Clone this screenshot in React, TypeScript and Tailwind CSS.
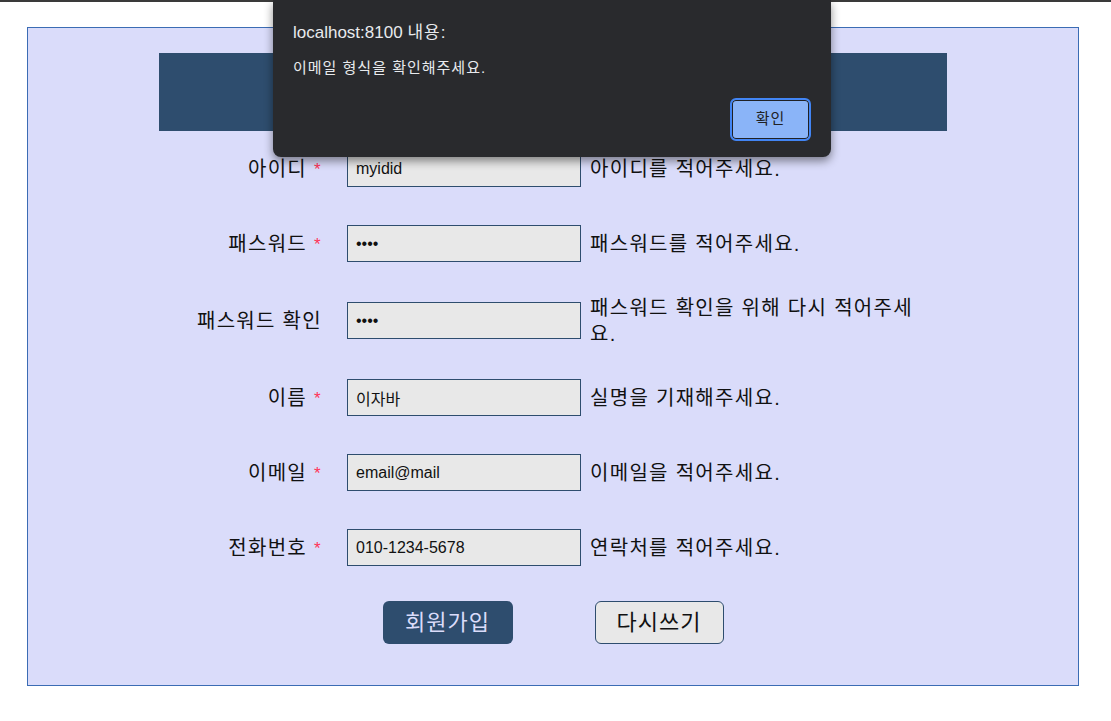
import React from 'react'

const font = "font-['Liberation_Sans','Noto_Sans_CJK_KR',sans-serif]"

/* 가입 폼 행 정의 */
const rows = [
  { label: '아이디', required: true, type: 'text', value: 'myidid', help: '아이디를 적어주세요.', h: 'h-[75px]' },
  { label: '패스워드', required: true, type: 'password', value: '1234', help: '패스워드를 적어주세요.', h: 'h-[75px]' },
  { label: '패스워드 확인', required: false, type: 'password', value: '1234', help: '패스워드 확인을 위해 다시 적어주세요.', h: 'h-[79px]' },
  { label: '이름', required: true, type: 'text', value: '이자바', help: '실명을 기재해주세요.', h: 'h-[75px]' },
  { label: '이메일', required: true, type: 'text', value: 'email@mail', help: '이메일을 적어주세요.', h: 'h-[75px]' },
  { label: '전화번호', required: true, type: 'text', value: '010-1234-5678', help: '연락처를 적어주세요.', h: 'h-[75px]' },
]

function AlertDialog() {
  return (
    <div className={`absolute left-[273px] top-0 flex h-[157px] w-[558px] flex-col rounded-b-[8px] bg-[#292a2d] px-5 pt-5 pb-4 shadow-[0_4px_10px_rgba(0,0,0,0.45)] ${font}`}>
      <p className="text-[17px] leading-[26px] text-[#e8eaed]">
        localhost:8100 <span className="tracking-[1px]">내용:</span>
      </p>
      <p className="mt-[11px] text-[15px] leading-[22px] tracking-[1px] text-[#e8eaed]">이메일 형식을 확인해주세요.</p>
      <div className="mt-[19px] flex justify-end">
        <button className="h-[43px] w-[81px] rounded-[6px] border-2 border-[#4285f4] bg-[#8ab4f8] text-[15px] tracking-[1px] text-[#202124] shadow-[inset_0_0_0_1px_#202124]">
          확인
        </button>
      </div>
    </div>
  )
}

export default function App() {
  return (
    <div className={`relative min-h-[721px] bg-white ${font}`}>
      <div className="h-[2px] bg-[#3a3a3a]" />

      <div className="ml-[27px] mt-[25px] w-[1052px] border border-[#3b6cb4] bg-[#dadcfa] pt-[25px] pb-[41px]">
        <div className="mx-auto flex h-[78px] w-[788px] items-center justify-center bg-[#2e4d6e]">
          <h1 className="text-[26px] text-[#dadcfa]">회원가입</h1>
        </div>

        <div className="mx-auto w-[788px]">
          {rows.map((r) => (
            <div key={r.label} className={`flex items-center ${r.h}`}>
              <label className="w-[163px] text-right text-[20px] tracking-[1.3px] text-[#111]">
                {r.label}
                {r.required && (
                  <span className="relative -top-[1px] ml-[7px] text-[17px] text-[#ff3358]">*</span>
                )}
              </label>
              <input
                type={r.type}
                defaultValue={r.value}
                className="ml-[25px] h-[37px] w-[234px] border border-[#2e4d6e] bg-[#e8e8e8] px-2 text-[16px] text-[#111] outline-none"
              />
              <p className="ml-[9px] w-[330px] text-[20px] leading-[26px] tracking-[1.3px] text-[#111]">{r.help}</p>
            </div>
          ))}
        </div>

        <div className="mt-4 flex justify-center gap-[82px]">
          <button className="h-[43px] w-[130px] rounded-[6px] bg-[#2e4d6e] text-[22px] tracking-[1px] text-[#dadcfa]">
            회원가입
          </button>
          <button className="h-[43px] w-[129px] rounded-[6px] border border-[#2e4d6e] bg-[#e8e8e8] text-[22px] tracking-[1px] text-[#111]">
            다시쓰기
          </button>
        </div>
      </div>

      <AlertDialog />
    </div>
  )
}
